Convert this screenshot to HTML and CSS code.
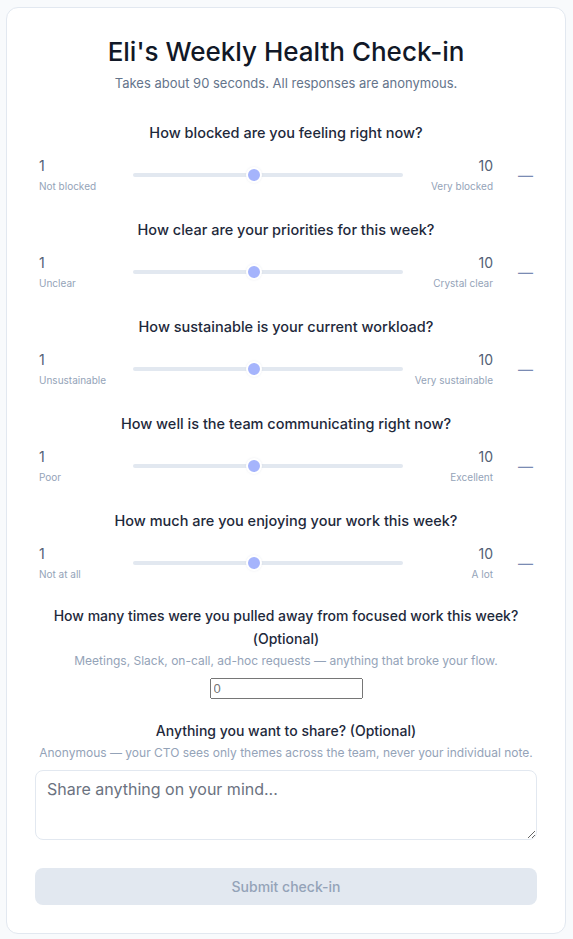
FILE: index.html
```html
<!DOCTYPE html>
<html lang="en">
<head>
    <meta charset="UTF-8">
    <meta name="viewport" content="width=device-width, initial-scale=1.0">
    <title>Eli's Weekly Health Check-in</title>
    <link rel="stylesheet" href="styles.css">
</head>
<body>
<div class="card">
    <h1 class="title">Eli's Weekly Health Check-in</h1>
    <p class="subtitle">Takes about 90 seconds. All responses are anonymous.</p>

    <div class="question">
        <div class="question-label">How blocked are you feeling right now?</div>
        <div class="scale-row">
            <div class="scale-end">
                <div class="scale-num">1</div>
                <div class="scale-text">Not blocked</div>
            </div>
            <input class="slider" type="range" min="1" max="10" value="5">
            <div class="scale-end right">
                <div class="scale-num">10</div>
                <div class="scale-text">Very blocked</div>
            </div>
            <div class="scale-value">—</div>
        </div>
    </div>

    <div class="question">
        <div class="question-label">How clear are your priorities for this week?</div>
        <div class="scale-row">
            <div class="scale-end">
                <div class="scale-num">1</div>
                <div class="scale-text">Unclear</div>
            </div>
            <input class="slider" type="range" min="1" max="10" value="5">
            <div class="scale-end right">
                <div class="scale-num">10</div>
                <div class="scale-text">Crystal clear</div>
            </div>
            <div class="scale-value">—</div>
        </div>
    </div>

    <div class="question">
        <div class="question-label">How sustainable is your current workload?</div>
        <div class="scale-row">
            <div class="scale-end">
                <div class="scale-num">1</div>
                <div class="scale-text">Unsustainable</div>
            </div>
            <input class="slider" type="range" min="1" max="10" value="5">
            <div class="scale-end right">
                <div class="scale-num">10</div>
                <div class="scale-text">Very sustainable</div>
            </div>
            <div class="scale-value">—</div>
        </div>
    </div>

    <div class="question">
        <div class="question-label">How well is the team communicating right now?</div>
        <div class="scale-row">
            <div class="scale-end">
                <div class="scale-num">1</div>
                <div class="scale-text">Poor</div>
            </div>
            <input class="slider" type="range" min="1" max="10" value="5">
            <div class="scale-end right">
                <div class="scale-num">10</div>
                <div class="scale-text">Excellent</div>
            </div>
            <div class="scale-value">—</div>
        </div>
    </div>

    <div class="question">
        <div class="question-label">How much are you enjoying your work this week?</div>
        <div class="scale-row">
            <div class="scale-end">
                <div class="scale-num">1</div>
                <div class="scale-text">Not at all</div>
            </div>
            <input class="slider" type="range" min="1" max="10" value="5">
            <div class="scale-end right">
                <div class="scale-num">10</div>
                <div class="scale-text">A lot</div>
            </div>
            <div class="scale-value">—</div>
        </div>
    </div>

    <div class="question optional">
        <div class="question-label">How many times were you pulled away from focused work this week? (Optional)</div>
        <div class="hint">Meetings, Slack, on-call, ad-hoc requests — anything that broke your flow.</div>
        <input class="count-input" type="number" min="0" placeholder="0">
    </div>

    <div class="question optional">
        <div class="question-label">Anything you want to share? (Optional)</div>
        <div class="hint">Anonymous — your CTO sees only themes across the team, never your individual note.</div>
        <textarea class="note" placeholder="Share anything on your mind..."></textarea>
    </div>

    <button class="submit" disabled>Submit check-in</button>
</div>
</body>
</html>
```

FILE: styles.css
```css
* {
    box-sizing: border-box;
}

body {
    margin: 0;
    padding: 7px 7px 6px 6px;
    background-color: #f8fafc;
    font-family: 'Inter', 'Noto Sans', sans-serif;
    color: #1e293b;
}

.card {
    background-color: #ffffff;
    border: 1px solid #e2e8f0;
    border-radius: 12px;
    padding: 26px 28px 28px 28px;
}

.title {
    margin: 0;
    text-align: center;
    font-size: 26px;
    font-weight: 500;
    line-height: 36px;
    color: #111827;
}

.subtitle {
    margin: 3px 0 29px 0;
    text-align: center;
    font-size: 13px;
    line-height: 20px;
    color: #64748b;
}

.question {
    margin-bottom: 25px;
}

.question-label {
    text-align: center;
    font-size: 14.5px;
    font-weight: 500;
    line-height: 22px;
    color: #1e293b;
}

.scale-row {
    display: flex;
    align-items: center;
    gap: 10px;
    margin-top: 12px;
    padding: 0 4px;
}

.scale-end {
    width: 84px;
    flex-shrink: 0;
}

.scale-end.right {
    width: 80px;
    text-align: right;
}

.scale-num {
    font-size: 14px;
    line-height: 20px;
    color: #536176;
}

.scale-text {
    margin-top: 2px;
    font-size: 10px;
    line-height: 16px;
    color: #94a3b8;
}

.scale-value {
    width: 30px;
    text-align: right;
    font-size: 15px;
    color: #7a8bb3;
}

.slider {
    -webkit-appearance: none;
    appearance: none;
    flex: 1;
    min-width: 0;
    height: 16px;
    margin: 0;
    background: transparent;
}

.slider::-webkit-slider-runnable-track {
    height: 4px;
    border-radius: 2px;
    background-color: #e2e8f0;
}

.slider::-webkit-slider-thumb {
    -webkit-appearance: none;
    width: 16px;
    height: 16px;
    margin-top: -6px;
    border-radius: 50%;
    border: 2px solid #ffffff;
    background-color: #a5b4fc;
    box-shadow: 0 0 2px rgba(148, 163, 184, 0.2);
}

.optional {
    text-align: center;
    margin-bottom: 20px;
}

.question + .optional {
    margin-top: -3px;
}

.optional + .optional {
    margin-top: 0;
}

.optional .question-label {
    font-size: 14px;
    line-height: 23px;
}

.hint {
    margin-top: 1px;
    font-size: 12px;
    line-height: 20px;
    color: #94a3b8;
}

.count-input {
    width: 153px;
    height: 21px;
    margin-top: 7px;
    font-size: 13px;
}

.note {
    display: block;
    width: 100%;
    height: 70px;
    margin-top: 7px;
    padding: 8px 11px;
    border: 1px solid #e2e8f0;
    border-radius: 8px;
    font-family: 'Inter', 'Noto Sans', sans-serif;
    font-size: 16px;
    line-height: 20px;
    color: #1e293b;
}

.note::placeholder {
    color: #6b7280;
}

.submit {
    display: block;
    width: 100%;
    height: 37px;
    margin-top: 28px;
    border: none;
    border-radius: 8px;
    background-color: #e2e8f0;
    color: #94a3b8;
    font-family: 'Inter', 'Noto Sans', sans-serif;
    font-size: 14px;
    font-weight: 500;
}
```
